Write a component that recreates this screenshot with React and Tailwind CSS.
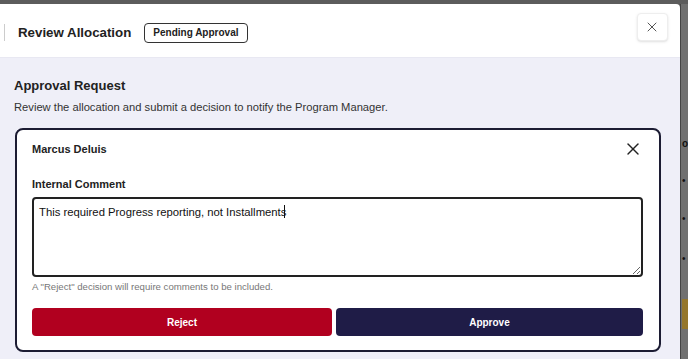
import { X } from 'lucide-react';

// Decision card inside the approval panel
const DecisionCard = () => (
  <div className="mt-[14px] mr-[19px] ml-[1px] rounded-lg border-2 border-[#1c1c33] bg-white pl-[15px] pr-[16px] pt-[12px] pb-[14px]">
    <div className="flex h-[14px] items-center justify-between">
      <span className="text-[11px] leading-[14px] font-bold text-[#222]">Marcus Deluis</span>
      <X className="h-[20px] w-[20px] text-[#222]" strokeWidth={1.7} />
    </div>
    <div className="mt-[21px] text-[11px] leading-[14px] font-bold text-[#222]">Internal Comment</div>
    <div className="relative mt-[6px]">
      <textarea
        className="block h-[80px] w-full rounded border-2 border-[#222] px-[5px] pt-[6px] text-[11.3px] leading-[14px] text-[#111] outline-none"
        defaultValue="This required Progress reporting, not Installments"
      />
      {/* text caret */}
      <span className="pointer-events-none absolute left-[252px] top-[8px] h-[13px] w-[1px] bg-[#111]" />
    </div>
    <p className="mt-[4px] text-[9.6px] leading-[12px] text-[#777]">A "Reject" decision will require comments to be included.</p>
    <div className="mt-[15px] flex gap-[4px]">
      <button className="h-[28px] w-[300px] rounded bg-[#b1001f] text-[10px] font-semibold text-white">Reject</button>
      <button className="h-[28px] flex-1 rounded bg-[#1f1c47] text-[10px] font-semibold text-white">Approve</button>
    </div>
  </div>
);

function App() {
  return (
    <div className="flex h-[359px] w-[688px] flex-col overflow-hidden bg-[#5c5c5c] font-['Liberation_Sans',Arial,sans-serif]">
      <div className="h-[4px] shrink-0" />
      <div className="flex min-h-0 flex-1">
        {/* Modal panel */}
        <div className="flex w-[681px] flex-col overflow-hidden rounded-tr-[4px] bg-white">
          <header className="flex h-[54px] shrink-0 items-center border-b border-[#e8e8f2] pt-[4px] pl-[4px] pr-[12px]">
            <div className="h-[17px] w-[1px] bg-[#ccc]" />
            <h1 className="ml-[13px] text-[13.3px] font-bold text-[#222]">Review Allocation</h1>
            <span className="ml-[13px] flex h-[20px] items-center rounded-[4px] border border-[#333] px-[8px] text-[10px] font-semibold text-[#222]">
              Pending Approval
            </span>
            <button className="mt-[-11px] ml-auto flex h-[28px] w-[31px] items-center justify-center rounded border border-[#eee] bg-white shadow-sm">
              <X className="h-[16px] w-[16px] text-[#555]" strokeWidth={1.5} />
            </button>
          </header>
          <main className="flex-1 bg-[#efeff8] pl-[14px] pt-[20px]">
            <h2 className="text-[13px] leading-[16px] font-bold text-[#222]">Approval Request</h2>
            <p className="mt-[6px] text-[11.2px] leading-[14px] text-[#333]">
              Review the allocation and submit a decision to notify the Program Manager.
            </p>
            <DecisionCard />
          </main>
        </div>
        {/* Background page peeking through */}
        <div className="flex flex-1 flex-col border-l border-[#444] bg-[#707070] pl-[1px] pt-[134px] text-[10px] leading-[12px] text-[#111]">
          <span className="font-bold">o</span>
          <span className="mt-[25px]">•</span>
          <span className="mt-[26px]">•</span>
          <span className="mt-[28px]">•</span>
          <div className="mt-[34px] h-[30px] bg-[#94762c]" />
        </div>
      </div>
    </div>
  );
}

export default App;
